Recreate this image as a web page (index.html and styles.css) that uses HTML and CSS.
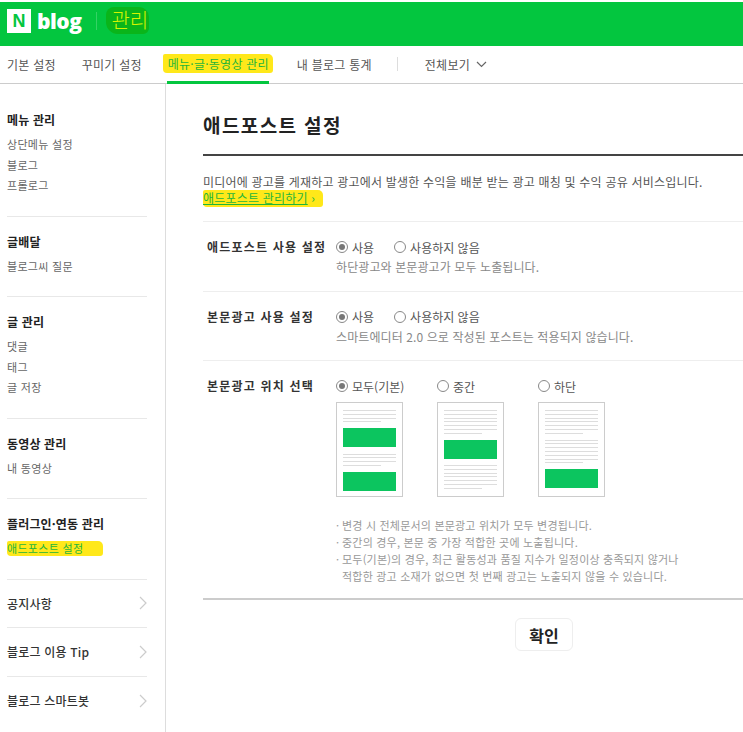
FILE: index.html
```html
<!DOCTYPE html>
<html lang="ko">
<head>
    <meta charset="UTF-8">
    <meta name="viewport" content="width=device-width, initial-scale=1.0">
    <title>애드포스트 설정</title>
    <link rel="stylesheet" href="styles.css">
</head>
<body>
    <header class="topbar">
        <span class="logo-n">N</span>
        <span class="logo-blog">blog</span>
        <span class="topbar-sep"></span>
        <span class="topbar-title">관리</span>
    </header>

    <nav class="tabs">
        <a class="tab tab-basic">기본 설정</a>
        <a class="tab tab-deco">꾸미기 설정</a>
        <a class="tab tab-active"><span class="marker">메뉴·글·동영상 관리</span></a>
        <a class="tab tab-stats">내 블로그 통계</a>
        <span class="tab-sep"></span>
        <a class="tab tab-all">전체보기
            <svg class="tab-chevron" width="11" height="7" viewBox="0 0 11 7"><path d="M1 1l4.5 4.5L10 1" fill="none" stroke="#666" stroke-width="1.2"/></svg>
        </a>
    </nav>

    <div class="layout">
        <aside class="sidebar">
            <section class="side-group">
                <h3>메뉴 관리</h3>
                <a>상단메뉴 설정</a>
                <a>블로그</a>
                <a>프롤로그</a>
            </section>
            <section class="side-group">
                <h3>글배달</h3>
                <a>블로그씨 질문</a>
            </section>
            <section class="side-group">
                <h3>글 관리</h3>
                <a>댓글</a>
                <a>태그</a>
                <a>글 저장</a>
            </section>
            <section class="side-group">
                <h3>동영상 관리</h3>
                <a>내 동영상</a>
            </section>
            <section class="side-group">
                <h3>플러그인·연동 관리</h3>
                <a><span class="marker side-marker">애드포스트 설정</span></a>
            </section>
            <a class="side-link">공지사항
                <svg width="8" height="14" viewBox="0 0 8 14"><path d="M1 1l6 6-6 6" fill="none" stroke="#ccc" stroke-width="1.2"/></svg>
            </a>
            <a class="side-link">블로그 이용 Tip
                <svg width="8" height="14" viewBox="0 0 8 14"><path d="M1 1l6 6-6 6" fill="none" stroke="#ccc" stroke-width="1.2"/></svg>
            </a>
            <a class="side-link">블로그 스마트봇
                <svg width="8" height="14" viewBox="0 0 8 14"><path d="M1 1l6 6-6 6" fill="none" stroke="#ccc" stroke-width="1.2"/></svg>
            </a>
        </aside>

        <main class="content">
            <h1>애드포스트 설정</h1>
            <div class="intro">
                <p>미디어에 광고를 게재하고 광고에서 발생한 수익을 배분 받는 광고 매칭 및 수익 공유 서비스입니다.</p>
                <a class="marker intro-link"><u>애드포스트 관리하기</u> ›</a>
            </div>

            <div class="row">
                <div class="row-label">애드포스트 사용 설정</div>
                <div class="row-body">
                    <div class="radios">
                        <label class="radio"><span class="dot on"></span>사용</label>
                        <label class="radio"><span class="dot"></span>사용하지 않음</label>
                    </div>
                    <p class="hint">하단광고와 본문광고가 모두 노출됩니다.</p>
                </div>
            </div>

            <div class="row">
                <div class="row-label">본문광고 사용 설정</div>
                <div class="row-body">
                    <div class="radios">
                        <label class="radio"><span class="dot on"></span>사용</label>
                        <label class="radio"><span class="dot"></span>사용하지 않음</label>
                    </div>
                    <p class="hint">스마트에디터 2.0 으로 작성된 포스트는 적용되지 않습니다.</p>
                </div>
            </div>

            <div class="row row-last">
                <div class="row-label">본문광고 위치 선택</div>
                <div class="row-body">
                    <div class="positions">
                        <div class="position">
                            <label class="radio"><span class="dot on"></span>모두(기본)</label>
                            <div class="page">
                                <i class="ln"></i><i class="ln"></i><i class="ln"></i><i class="ln short"></i>
                                <b class="ad"></b>
                                <i class="ln"></i><i class="ln"></i><i class="ln"></i><i class="ln short"></i>
                                <b class="ad"></b>
                            </div>
                        </div>
                        <div class="position">
                            <label class="radio"><span class="dot"></span>중간</label>
                            <div class="page">
                                <i class="ln"></i><i class="ln"></i><i class="ln"></i><i class="ln"></i><i class="ln"></i><i class="ln"></i><i class="ln short"></i>
                                <b class="ad"></b>
                                <i class="ln"></i><i class="ln"></i><i class="ln"></i><i class="ln"></i><i class="ln"></i><i class="ln"></i><i class="ln short"></i>
                            </div>
                        </div>
                        <div class="position">
                            <label class="radio"><span class="dot"></span>하단</label>
                            <div class="page">
                                <i class="ln"></i><i class="ln"></i><i class="ln"></i><i class="ln"></i><i class="ln"></i><i class="ln"></i><i class="ln short"></i>
                                <i class="gap"></i>
                                <i class="ln"></i><i class="ln"></i><i class="ln"></i><i class="ln"></i><i class="ln"></i><i class="ln"></i><i class="ln short"></i>
                                <b class="ad"></b>
                            </div>
                        </div>
                    </div>
                    <ul class="notes">
                        <li>변경 시 전체문서의 본문광고 위치가 모두 변경됩니다.</li>
                        <li>중간의 경우, 본문 중 가장 적합한 곳에 노출됩니다.</li>
                        <li>모두(기본)의 경우, 최근 활동성과 품질 지수가 일정이상 충족되지 않거나<br>적합한 광고 소재가 없으면 첫 번째 광고는 노출되지 않을 수 있습니다.</li>
                    </ul>
                </div>
            </div>

            <div class="actions">
                <button type="button">확인</button>
            </div>
        </main>
    </div>
</body>
</html>
```

FILE: styles.css
```css
* {
    box-sizing: border-box;
}

body {
    margin: 0;
    height: 732px;
    overflow: hidden;
    background-color: #fff;
    color: #555;
    font-family: "Noto Sans CJK KR", "Noto Sans", sans-serif;
    font-size: 12px;
}

h1, h3, p, ul {
    margin: 0;
    padding: 0;
}

/* Top green bar */
.topbar {
    display: flex;
    align-items: center;
    height: 44px;
    margin-top: 2px;
    padding: 0 0 7px 7px;
    background-color: #03c63f;
}

.logo-n {
    width: 24px;
    height: 24px;
    background-color: #fff;
    color: #03c63f;
    font-family: "Liberation Sans", sans-serif;
    font-size: 18px;
    font-weight: 700;
    line-height: 24px;
    text-align: center;
}

.logo-blog {
    margin-left: 6px;
    color: #fff;
    font-family: "Open Sans", sans-serif;
    font-size: 21px;
    font-weight: 800;
    letter-spacing: -0.5px;
}

.topbar-sep {
    width: 1px;
    height: 18px;
    margin-left: 15px;
    background-color: #35d265;
}

.topbar-title {
    margin-left: 9px;
    padding: 1px 1px 2px 5px;
    background-color: #0ab51a;
    border-radius: 8px 10px 6px 12px;
    color: #d6f500;
    font-size: 20px;
    font-weight: 300;
    line-height: 24px;
}

/* Tabs */
.tabs {
    display: flex;
    height: 38px;
    border-bottom: 1px solid #ccc;
    letter-spacing: 0.25px;
}

.tab {
    display: flex;
    align-items: center;
    flex: none;
    height: 38px;
    padding-bottom: 2px;
}

.tab-basic {
    margin-left: 7px;
}

.tab-deco {
    margin-left: 26px;
}

.tab-active {
    justify-content: center;
    width: 102px;
    margin-left: 25px;
    padding-bottom: 0;
    border-bottom: 3px solid #03c63f;
    white-space: nowrap;
}

.tab-stats {
    margin-left: 28px;
}

.tab-sep {
    width: 1px;
    height: 14px;
    margin: 11px 0 0 25px;
    background-color: #ddd;
}

.tab-all {
    margin-left: 27px;
}

.tab-chevron {
    margin-left: 6px;
}

.marker {
    background-color: #ffe81a;
    border-radius: 2px 5px 3px 4px;
    color: #1fb53a;
}

.tab-active .marker {
    margin: 0 -5px;
    padding: 1px 4px 1px 5px;
}

/* Sidebar + content */
.layout {
    display: flex;
    height: 648px;
}

.sidebar {
    flex: 0 0 166px;
    padding: 11px 18px 0 7px;
    border-right: 1px solid #ddd;
}

.side-group {
    display: flex;
    flex-direction: column;
    padding: 15px 0 20px;
    border-bottom: 1px solid #e8e8e8;
}

.side-group h3 {
    margin-bottom: 4px;
    color: #222;
    font-size: 12px;
    font-weight: 700;
    line-height: 20px;
    letter-spacing: 0.15px;
}

.side-group a {
    color: #666;
    font-size: 11px;
    line-height: 20.5px;
    letter-spacing: 0.3px;
}

.side-marker {
    display: inline-block;
    padding-right: 20px;
    line-height: 15px;
}

.side-link {
    display: flex;
    align-items: center;
    justify-content: space-between;
    height: 48.5px;
    border-bottom: 1px solid #e8e8e8;
    color: #333;
    font-weight: 500;
    letter-spacing: 0.2px;
}

.side-link:last-child {
    border-bottom: none;
}

.content {
    flex: 1;
    min-width: 0;
    padding-left: 37px;
}

h1 {
    height: 72px;
    padding-top: 28px;
    border-bottom: 2px solid #444;
    color: #222;
    font-size: 19px;
    font-weight: 700;
    line-height: 26px;
    letter-spacing: 1.4px;
}

.intro {
    height: 66px;
    padding-top: 18px;
    border-bottom: 1px solid #eee;
    line-height: 16px;
    letter-spacing: 0.2px;
    white-space: nowrap;
}

.intro-link {
    display: inline-block;
    padding: 0 8px 1px 0;
}

.row {
    display: flex;
    height: 69.5px;
    padding: 15px 0 0 4px;
    border-bottom: 1px solid #eee;
}

.row-last {
    height: 239px;
    border-bottom: 2px solid #ccc;
}

.row-label {
    flex: 0 0 129px;
    color: #333;
    font-weight: 700;
    line-height: 20px;
    letter-spacing: 1.2px;
}

.radios {
    display: flex;
    gap: 20px;
}

.radio {
    display: flex;
    align-items: center;
    height: 20px;
}

.dot {
    position: relative;
    width: 12px;
    height: 12px;
    margin-right: 4px;
    border: 1px solid #888;
    border-radius: 50%;
}

.dot.on::after {
    content: "";
    position: absolute;
    top: 2px;
    left: 2px;
    width: 6px;
    height: 6px;
    border-radius: 50%;
    background-color: #777;
}

.hint {
    margin-top: 1px;
    color: #888;
    line-height: 18px;
    letter-spacing: 0.1px;
}

.positions {
    display: flex;
}

.position {
    width: 101px;
}

.page {
    display: flex;
    flex-direction: column;
    width: 67px;
    height: 95px;
    margin-top: 6px;
    padding: 7px 6px 0;
    border: 1px solid #ccc;
}

.ln {
    flex: none;
    height: 1px;
    margin-bottom: 2.8px;
    background-color: #ddd;
}

.ln.short {
    width: 71%;
}

.gap {
    flex: none;
    height: 3px;
}

.ad {
    flex: none;
    height: 19px;
    margin: 3px 0 6.5px;
    background-color: #0cc55f;
}

.notes {
    margin-top: 20px;
    list-style: none;
    color: #999;
    font-size: 11px;
    line-height: 17px;
    letter-spacing: 0.2px;
}

.notes li {
    position: relative;
    padding-left: 6px;
}

.notes li::before {
    content: "·";
    position: absolute;
    left: 0;
}

.actions {
    padding: 18px 0 0 312px;
}

.actions button {
    width: 58px;
    height: 33px;
    background-color: #fff;
    border: 1px solid #eee;
    border-radius: 6px;
    color: #222;
    font-family: inherit;
    font-size: 16px;
    font-weight: 700;
}
```
